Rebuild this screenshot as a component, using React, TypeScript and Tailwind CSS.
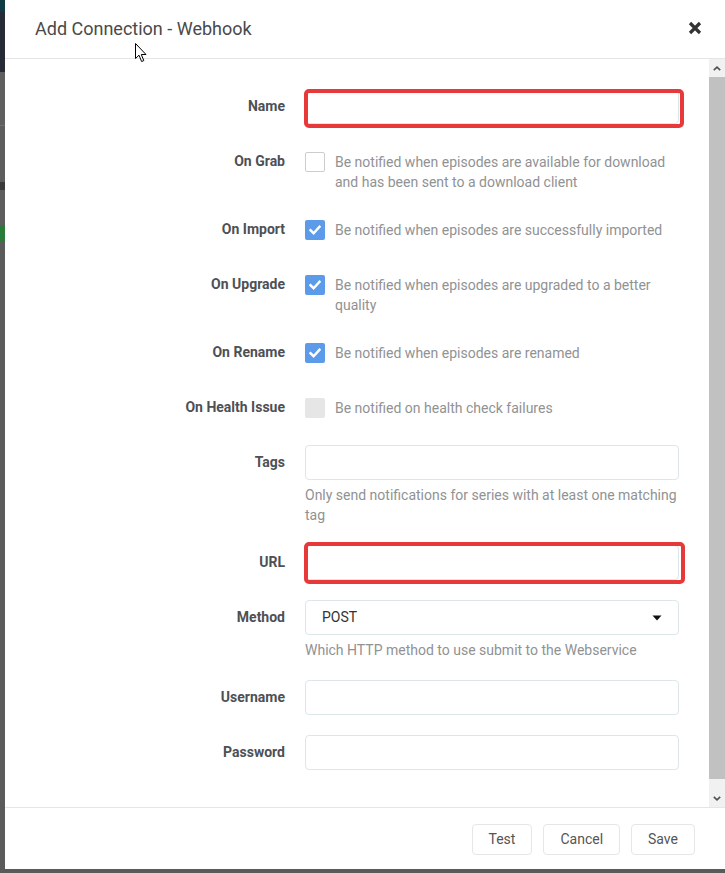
import React from "react";

const labelCls =
  "w-[250px] shrink-0 text-right pr-0 mr-[20px] font-bold text-[14px] leading-[35px] text-[#4d5055]";

function Checkbox({ state }: { state: "on" | "off" | "disabled" }) {
  if (state === "on") {
    return (
      <div className="w-[20px] h-[20px] shrink-0 rounded-[2px] bg-[#5b9be9] flex items-center justify-center">
        <svg width="12" height="10" viewBox="0 0 12 10">
          <path d="M1.5 5.2 L4.6 8.2 L10.5 1.8" fill="none" stroke="#fff" strokeWidth="2.4" strokeLinecap="square" />
        </svg>
      </div>
    );
  }
  if (state === "disabled") {
    return <div className="w-[20px] h-[20px] shrink-0 rounded-[2px] bg-[#e6e6e6]" />;
  }
  return <div className="w-[20px] h-[20px] shrink-0 rounded-[2px] border border-[#cdcdcd] bg-white" />;
}

function CheckRow({ label, text, state }: { label: string; text: string; state: "on" | "off" | "disabled" }) {
  return (
    <div className="flex mb-[20px]">
      <div className={labelCls}>{label}</div>
      <div className="flex-1 min-h-[35px] pt-[8px] flex items-start gap-[10px]">
        <Checkbox state={state} />
        <div className="text-[14px] leading-[20px] text-[#909293]">{text}</div>
      </div>
    </div>
  );
}

function Input({ highlight }: { highlight?: "name" | "url" }) {
  return (
    <div className="relative">
      <div className="h-[35px] rounded-[4px] border border-[#dde6e9] bg-white" />
      {highlight === "name" && (
        <div className="absolute top-[0px] bottom-[-4px] left-[-1px] right-[-5px] border-[4px] border-[#e8393a] rounded-[5px]" />
      )}
      {highlight === "url" && (
        <div className="absolute top-[-3px] bottom-[-4px] left-[-1px] right-[-6px] border-[4px] border-[#e8393a] rounded-[5px]" />
      )}
    </div>
  );
}

function InputRow({
  label,
  help,
  highlight,
  children,
}: {
  label: string;
  help?: string;
  highlight?: "name" | "url";
  children?: React.ReactNode;
}) {
  return (
    <div className="flex mb-[20px]">
      <div className={labelCls}>{label}</div>
      <div className="flex-1">
        {children ?? <Input highlight={highlight} />}
        {help && <div className="mt-[5px] text-[14px] leading-[20px] text-[#909293]">{help}</div>}
      </div>
    </div>
  );
}

export default function App() {
  return (
    <div className="w-[725px] h-[873px] flex flex-col bg-[#5b5b5b] font-['Roboto',sans-serif] overflow-hidden">
      <div className="flex flex-1 min-h-0">
        {/* backdrop strip */}
        <div className="w-[5px] shrink-0 flex flex-col">
          <div className="h-[12px] bg-[#0f3b44]" />
          <div className="h-[60px] bg-[#262b35]" />
          <div className="h-[53px] bg-[#5f5f5f]" />
          <div className="h-[1px] bg-[#707070]" />
          <div className="h-[56px] bg-[#5d5d5d]" />
          <div className="h-[8px] bg-[#3a3a3a]" />
          <div className="h-[35px] bg-[#5d5d5d]" />
          <div className="h-[16px] bg-[#2a7a3a]" />
          <div className="flex-1 bg-[#5b5b5b]" />
        </div>

        {/* modal */}
        <div className="flex-1 bg-white flex flex-col relative">
          {/* header */}
          <div className="h-[59px] shrink-0 border-b border-[#e5e5e5] flex items-center justify-between pl-[30px] pr-[23px]">
            <div className="text-[18px] text-[#4a4a4a] leading-none">Add Connection - Webhook</div>
            <svg width="14" height="14" viewBox="0 0 14 14" className="-mt-[2px]">
              <path d="M2 2 L12 12 M12 2 L2 12" stroke="#333" strokeWidth="3.2" strokeLinecap="butt" />
            </svg>
          </div>

          {/* body */}
          <div className="h-[748px] shrink-0 flex">
            <div className="flex-1 overflow-hidden pt-[30px] pl-[30px] pr-[30px]">
              <InputRow label="Name" highlight="name" />
              <CheckRow
                label="On Grab"
                state="off"
                text="Be notified when episodes are available for download and has been sent to a download client"
              />
              <CheckRow label="On Import" state="on" text="Be notified when episodes are successfully imported" />
              <CheckRow label="On Upgrade" state="on" text="Be notified when episodes are upgraded to a better quality" />
              <CheckRow label="On Rename" state="on" text="Be notified when episodes are renamed" />
              <CheckRow label="On Health Issue" state="disabled" text="Be notified on health check failures" />
              <InputRow label="Tags" help="Only send notifications for series with at least one matching tag" />
              <InputRow label="URL" highlight="url" />
              <InputRow label="Method" help="Which HTTP method to use submit to the Webservice">
                <div className="h-[35px] rounded-[4px] border border-[#dde6e9] bg-white flex items-center justify-between pl-[16px] pr-[16px]">
                  <span className="text-[14px] text-[#333]">POST</span>
                  <svg width="10" height="6" viewBox="0 0 10 6">
                    <path d="M0.5 0.5 L9.5 0.5 L5 5.5 Z" fill="#111" />
                  </svg>
                </div>
              </InputRow>
              <InputRow label="Username" />
              <InputRow label="Password" />
            </div>

            {/* scrollbar */}
            <div className="w-[16px] shrink-0 bg-[#f1f1f1] flex flex-col">
              <div className="h-[18px] flex items-center justify-center">
                <svg width="8" height="5" viewBox="0 0 8 5">
                  <path d="M0.8 4.2 L4 1.2 L7.2 4.2" fill="none" stroke="#505050" strokeWidth="1.6" />
                </svg>
              </div>
              <div className="flex-1 bg-[#c1c1c1]" />
              <div className="h-[10px]" />
              <div className="h-[18px] flex items-center justify-center">
                <svg width="8" height="5" viewBox="0 0 8 5">
                  <path d="M0.8 0.8 L4 3.8 L7.2 0.8" fill="none" stroke="#505050" strokeWidth="1.6" />
                </svg>
              </div>
            </div>
          </div>

          {/* footer */}
          <div className="flex-1 border-t border-[#e5e5e5] flex items-start justify-end gap-[11px] pt-[16px] pr-[30px]">
            <button className="h-[31px] px-[16px] rounded-[4px] border border-[#e6e6e6] bg-white text-[14px] text-[#555]">
              Test
            </button>
            <button className="h-[31px] px-[16px] rounded-[4px] border border-[#e6e6e6] bg-white text-[14px] text-[#555]">
              Cancel
            </button>
            <button className="h-[31px] px-[16px] rounded-[4px] border border-[#e6e6e6] bg-white text-[14px] text-[#555]">
              Save
            </button>
          </div>

          {/* mouse cursor */}
          <svg
            className="absolute left-[130px] top-[43px]"
            width="13"
            height="20"
            viewBox="0 0 13 20"
          >
            <path
              d="M0.5 0.5 L0.5 15.5 L4 12.2 L6.6 18.5 L8.8 17.6 L6.3 11.5 L11 11.5 Z"
              fill="#fff"
              stroke="#000"
              strokeWidth="1"
              strokeLinejoin="miter"
            />
          </svg>
        </div>
      </div>
      <div className="h-[4px] shrink-0 bg-[#5a5a5a]" />
    </div>
  );
}
